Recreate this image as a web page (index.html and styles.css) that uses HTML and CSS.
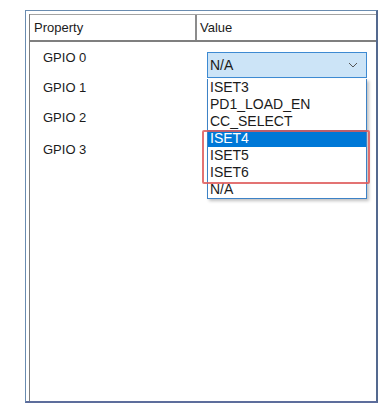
FILE: index.html
```html
<!DOCTYPE html>
<html lang="en">
<head>
    <meta charset="UTF-8">
    <meta name="viewport" content="width=device-width, initial-scale=1.0">
    <title>GPIO Properties</title>
    <link rel="stylesheet" href="styles.css">
</head>
<body>
    <div class="frame">
        <div class="grid">
            <div class="row header">
                <div class="cell prop">Property</div>
                <div class="cell value">Value</div>
            </div>
            <div class="row">
                <div class="cell prop">GPIO 0</div>
                <div class="cell value">
                    <div class="combo">
                        <div class="combo-box">
                            <span>N/A</span>
                            <svg width="10" height="6" viewBox="0 0 10 6">
                                <path d="M1 1 L5 5 L9 1" fill="none" stroke="#555" stroke-width="1"/>
                            </svg>
                        </div>
                        <ul class="combo-list">
                            <li>ISET3</li>
                            <li>PD1_LOAD_EN</li>
                            <li>CC_SELECT</li>
                            <li class="selected">ISET4</li>
                            <li>ISET5</li>
                            <li>ISET6</li>
                            <li>N/A</li>
                        </ul>
                        <div class="mark"></div>
                    </div>
                </div>
            </div>
            <div class="row">
                <div class="cell prop">GPIO 1</div>
                <div class="cell value"></div>
            </div>
            <div class="row">
                <div class="cell prop">GPIO 2</div>
                <div class="cell value"></div>
            </div>
            <div class="row last">
                <div class="cell prop">GPIO 3</div>
                <div class="cell value"></div>
            </div>
        </div>
    </div>
</body>
</html>
```

FILE: styles.css
```css
* {
    margin: 0;
    padding: 0;
    box-sizing: border-box;
}
body {
    background: #fff;
    font-family: "Liberation Sans", Arial, sans-serif;
    font-size: 13px;
    color: #1b1b1b;
}
.frame {
    margin: 10px 0 0 25px;
    width: 353px;
    height: 393px;
    border-left: 1px solid #6a8cb0;
    border-top: 1px solid #6a8cb0;
    border-right: 2px solid #54698f;
    border-bottom: 2px solid #5d6d9c;
    padding: 3px 0 0 3px;
}
.grid {
    height: 100%;
    border-left: 1px solid #7d7d7d;
}
.row {
    display: flex;
    height: 30px;
    align-items: center;
}
.row.last {
    height: 34px;
}
.header {
    height: 28px;
    border-top: 1px solid #a3a3a3;
    border-bottom: 2px solid #7f7f7f;
}
.cell.prop {
    width: 167px;
    padding-left: 13px;
}
.header .cell {
    height: 100%;
    display: flex;
    align-items: center;
}
.header .cell.prop {
    padding-left: 4px;
    border-right: 2px solid #8c8c8c;
}
.header .cell.value {
    padding-left: 3px;
}
.cell.value {
    flex: 1;
    position: relative;
    height: 100%;
}
.combo {
    position: absolute;
    top: 10px;
    left: 10px;
    width: 160px;
    font-size: 14px;
    z-index: 1;
}
.combo-box {
    height: 26px;
    background: #cce4f7;
    border: 1px solid #3d8ad2;
    display: flex;
    align-items: center;
    justify-content: space-between;
    padding: 0 8px 0 2px;
}
.combo-list {
    list-style: none;
    background: #fff;
    border: 1px solid #3d82c6;
    border-top: none;
    margin-top: 1px;
    box-shadow: 2px 2px 3px rgba(0, 0, 0, 0.25);
}
.combo-list li {
    height: 17px;
    line-height: 17px;
    padding-left: 2px;
}
.combo-list li.selected {
    background: #0078d7;
    color: #fff;
}
.mark {
    position: absolute;
    top: 78px;
    left: -5px;
    width: 168px;
    height: 54px;
    border: 2px solid rgba(222, 90, 90, 0.85);
    border-radius: 2px;
}
```
